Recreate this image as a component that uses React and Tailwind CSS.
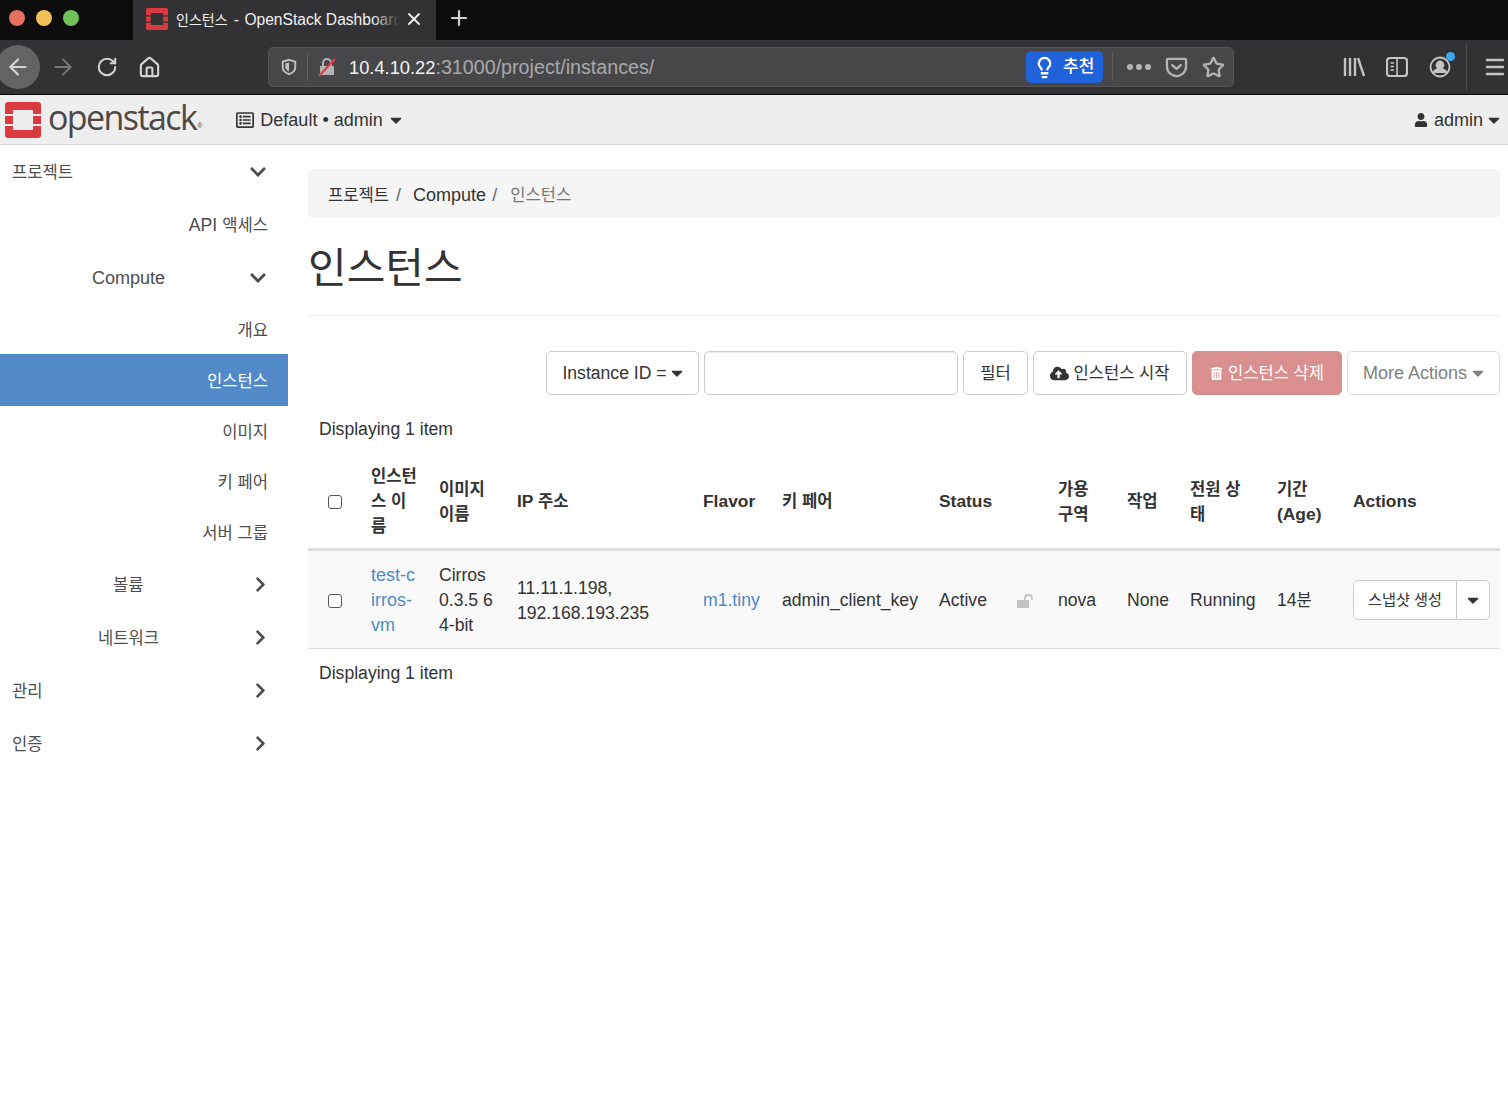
import { ArrowLeft, ArrowRight, RotateCw, Home, X, Plus, Lightbulb, Star, Menu } from 'lucide-react';
import { FaUser, FaCloudUploadAlt, FaTrashAlt, FaChevronDown, FaChevronRight, FaCaretDown, FaRegListAlt } from 'react-icons/fa';

// Korean glyphs run wider in Noto than in the original font, so they get their own size
const K = ({ children }) => <span className="text-[16.6px]">{children}</span>;

const LogoMark = ({ className }) => (
    <svg viewBox="0 0 36 36" className={className}>
        <path fill="#da3a3f" d="M3 0h30a3 3 0 0 1 3 3v9h-8V8H8v4H0V3a3 3 0 0 1 3-3zM0 14h8v8H0zM28 14h8v8h-8zM0 24h8v4h20v-4h8v9a3 3 0 0 1-3 3H3a3 3 0 0 1-3-3z" />
    </svg>
);

const Chrome = () => (
    <div className="bg-[#323234]">
        <div className="h-10 bg-[#0c0c0d] flex items-center">
            <div className="w-[133px] pl-[9px] pb-[5px] flex items-center gap-[11px]">
                <span className="w-4 h-4 rounded-full bg-[#e5705f]" />
                <span className="w-4 h-4 rounded-full bg-[#f2bf57]" />
                <span className="w-4 h-4 rounded-full bg-[#6fc253]" />
            </div>
            <div className="w-[303px] h-10 bg-[#323234] flex items-center pl-[13px] pb-[3px] text-white">
                <LogoMark className="w-[22px] h-[22px] shrink-0" />
                <div className="ml-[8px] w-[224px] relative overflow-hidden whitespace-nowrap text-[15.6px] leading-[20px] pt-[2px] text-[#f0f0f0]">
                    <span className="text-[14px]">인스턴스</span><span className="ml-[2px]"> - </span><span className="ml-[1px]">OpenStack Dashboard</span>
                    <span className="absolute right-0 top-0 bottom-0 w-7 bg-linear-to-r from-transparent to-[#323234]" />
                </div>
                <X size={20} strokeWidth={2.2} className="ml-[4px] text-[#f0f0f0]" />
            </div>
            <Plus size={24} strokeWidth={2.2} className="ml-[11px] mb-[4px] text-[#d0d0d0]" />
        </div>
        <div className="h-[55px] flex items-center border-b border-b-[#0c0c0d] relative">
            <div className="w-[44px] h-[44px] rounded-full bg-[#636365] -ml-[4px] flex items-center justify-center">
                <ArrowLeft size={26} strokeWidth={2} className="text-[#d4d4d4]" />
            </div>
            <ArrowRight size={26} strokeWidth={1.8} className="ml-[10px] text-[#77777a]" />
            <RotateCw size={22} strokeWidth={2.2} className="ml-[20px] text-[#d4d4d4]" />
            <Home size={23} strokeWidth={2.2} className="ml-[20px] text-[#d4d4d4]" />
            <div className="ml-[107px] w-[966px] h-10 rounded-[5px] bg-[#474749] border border-[#555557] flex items-center">
                <svg viewBox="0 0 20 20" className="w-[18px] h-[20px] ml-[11px] text-[#c4c4c4]" fill="none" stroke="currentColor" strokeWidth="2">
                    <path d="M10 2l7 2v6c0 4-3 6.5-7 8-4-1.500-7-4-7-8V4z" />
                    <path fill="currentColor" stroke="none" d="M10 5v10c-2.500-1-4-3-4-5V6z" />
                </svg>
                <span className="ml-[9px] w-px h-7 bg-[#5f5f61]" />
                <svg viewBox="0 0 20 20" className="w-5 h-5 ml-[9px]">
                    <path fill="#b4b4b4" d="M3 9h14v9H3z" />
                    <path fill="none" stroke="#b4b4b4" strokeWidth="2" d="M6 9V6a4 4 0 0 1 8 0v3" />
                    <path stroke="#e8384f" strokeWidth="2" d="M2 19L18 2" />
                </svg>
                <span className="ml-[12px] pt-[1px] text-[18.3px] text-[#f4f4f4] whitespace-nowrap">10.4.10.22<span className="text-[19.7px] text-[#a9a9ab]">:31000/project/instances/</span></span>
                <div className="ml-auto h-8 w-[77px] rounded-[5px] bg-[#1f62da] flex items-center text-white">
                    <Lightbulb size={23} strokeWidth={2.4} className="ml-[7px]" />
                    <span className="ml-[7px] text-[17px] font-medium">추천</span>
                </div>
                <span className="ml-[9px] w-px h-7 bg-[#5f5f61]" />
                <svg viewBox="0 0 24 8" className="w-[24px] h-2 ml-[14px]" fill="#b4b4b4">
                    <circle cx="3" cy="4" r="3" /><circle cx="12" cy="4" r="3" /><circle cx="21" cy="4" r="3" />
                </svg>
                <svg viewBox="0 0 24 22" className="w-[23px] h-[21px] ml-[14px]" fill="none" stroke="#b4b4b4" strokeWidth="2.4" strokeLinecap="round" strokeLinejoin="round">
                    <path d="M3 2h18a1 1 0 0 1 1 1v7a10 10 0 0 1-20 0V3a1 1 0 0 1 1-1z" />
                    <path d="M7.500 8.500l4.500 4 4.500-4" />
                </svg>
                <Star size={23} strokeWidth={2.4} className="ml-[14px] mr-[8px] text-[#b4b4b4]" />
            </div>
            <svg viewBox="0 0 22 20" className="w-[22px] h-[20px] ml-[109px]" fill="none" stroke="#c4c4c4" strokeWidth="2.400">
                <path d="M2 1v18M7 1v18M12 1v18M15 1l6 18" />
            </svg>
            <svg viewBox="0 0 22 20" className="w-[22px] h-[20px] ml-[21px]" fill="none" stroke="#c4c4c4" strokeWidth="2.200">
                <rect x="1" y="1" width="20" height="18" rx="3" />
                <path d="M11 1v18M4.500 6H8M4.500 9.500H8M4.500 13H8" strokeWidth="1.600" />
            </svg>
            <div className="relative ml-[21px] w-[22px] h-[22px]">
                <svg viewBox="0 0 22 22" className="w-[22px] h-[22px]" fill="none" stroke="#c4c4c4" strokeWidth="1.800">
                    <circle cx="11" cy="11" r="9.500" />
                    <circle cx="11" cy="9" r="3.500" fill="#c4c4c4" />
                    <path d="M4.500 17c1-3.500 3.500-4 6.500-4s5.500.5 6.500 4" fill="#c4c4c4" />
                </svg>
                <span className="absolute -top-[4px] -right-[4px] w-[9px] h-[9px] rounded-full bg-[#3ea6ef]" />
            </div>
            <span className="ml-[15px] w-px h-[46px] bg-[#4c4c4e]" />
            <Menu size={24} strokeWidth={2.4} className="ml-[16px] text-[#c4c4c4]" />
        </div>
    </div>
);

const TopNav = () => (
    <div className="h-[50px] bg-[#eeeeee] border-b border-b-[#d8d8d8] flex items-center text-[18px] text-[#333333]">
        <LogoMark className="ml-[5px] w-[36px] h-[36px]" />
        <span className="ml-[7px] text-[34px] font-medium tracking-[-1.6px] leading-none -mt-[6px] text-[#4e4845] font-['Open_Sans',sans-serif]">openstack</span>
        <span className="text-[7px] mt-[14px] ml-[1px] text-[#4e4845]">®</span>
        <FaRegListAlt size={18} className="ml-[34px] mt-[1px]" />
        <span className="ml-[6px] mt-[1px]">Default • admin</span>
        <FaCaretDown size={18} className="ml-[4px]" />
        <FaUser size={14} className="ml-auto" />
        <span className="ml-[6px] mt-[1px]">admin</span>
        <FaCaretDown size={18} className="ml-[2px] mr-[5px]" />
    </div>
);

const SideRow = ({ children, chevron, pad = 'justify-end pr-5', h = 'h-[53px]', active }) => (
    <div className={`${h} flex items-center relative pt-[2px] ${pad} ${active ? 'bg-[#5289c9] text-white' : ''}`}>
        <span>{children}</span>
        {chevron === 'down' && <FaChevronDown size={18} className="absolute right-[21px] top-[18px]" />}
        {chevron === 'right' && <FaChevronRight size={17} className="absolute right-[19px] top-[18px]" />}
    </div>
);

const Sidebar = () => (
    <div className="w-[288px] shrink-0 text-[18px] text-[#4d4d4d]">
        <SideRow chevron="down" pad="pl-3"><K>프로젝트</K></SideRow>
        <SideRow><span className="text-[17.6px]">API</span> <K>액세스</K></SideRow>
        <SideRow chevron="down" pad="pl-[92px]">Compute</SideRow>
        <SideRow h="h-[50px]"><K>개요</K></SideRow>
        <SideRow h="h-[52px]" active><K>인스턴스</K></SideRow>
        <SideRow h="h-[50px]"><K>이미지</K></SideRow>
        <SideRow h="h-[51px]"><K>키 페어</K></SideRow>
        <SideRow h="h-[51px]"><K>서버 그룹</K></SideRow>
        <SideRow chevron="right" pad="pl-[113px]"><K>볼륨</K></SideRow>
        <SideRow chevron="right" pad="pl-[98px]"><K>네트워크</K></SideRow>
        <SideRow chevron="right" pad="pl-3"><K>관리</K></SideRow>
        <SideRow chevron="right" pad="pl-3"><K>인증</K></SideRow>
    </div>
);

const Btn = ({ className = '', children }) => (
    <div className={`h-[44px] rounded-[5px] border border-[#cccccc] flex items-center justify-center whitespace-nowrap bg-white ${className}`}>{children}</div>
);

const Check = () => <span className="block w-[14px] h-[14px] rounded-[3px] border-[1.5px] border-[#555555] bg-white mx-auto" />;

const widths = [53, 68, 78, 186, 79, 157, 78, 41, 69, 63, 87, 76, 157];

const Table = () => (
    <table className="w-[1192px] table-fixed border-collapse">
        <colgroup>
            {widths.map((w, i) => <col key={i} style={{ width: w }} />)}
        </colgroup>
        <thead>
            <tr className="border-b-[3px] border-b-[#dddddd] font-bold text-left text-[17.4px] [&>th]:align-middle [&>th]:px-[10px] [&>th]:pt-[1px] [&>th]:pb-[9px]">
                <th className="!pl-[20px] !pr-[19px]"><Check /></th>
                <th><K>인스턴<br />스 이<br />름</K></th>
                <th><K>이미지<br />이름</K></th>
                <th>IP <K>주소</K></th>
                <th>Flavor</th>
                <th><K>키 페어</K></th>
                <th colSpan={2}>Status</th>
                <th><K>가용<br />구역</K></th>
                <th><K>작업</K></th>
                <th><K>전원 상<br />태</K></th>
                <th><K>기간</K><br />(Age)</th>
                <th>Actions</th>
            </tr>
        </thead>
        <tbody>
            <tr className="bg-[#f9f9f9] border-b border-b-[#dddddd] [&>td]:align-middle [&>td]:px-[10px] [&>td]:pt-[12px] [&>td]:pb-[10px]">
                <td className="!pl-[20px] !pr-[19px]"><Check /></td>
                <td className="text-[#4e8ac8] text-[18px]">test-c<br />irros-<br />vm</td>
                <td>Cirros<br />0.3.5 6<br />4-bit</td>
                <td>11.11.1.198,<br />192.168.193.235</td>
                <td className="text-[#4e8ac8]">m1.tiny</td>
                <td className="whitespace-nowrap">admin_client_key</td>
                <td>Active</td>
                <td>
                    <svg viewBox="0 0 18 14" className="w-[18px] h-[14px]">
                        <path fill="#c4c4c4" d="M0 6h12v8H0z" />
                        <path fill="none" stroke="#c4c4c4" strokeWidth="1.800" d="M8 6V4a3 3 0 0 1 3-3h1a3 3 0 0 1 3 3v2" />
                    </svg>
                </td>
                <td>nova</td>
                <td className="whitespace-nowrap">None</td>
                <td className="whitespace-nowrap">Running</td>
                <td>14<K>분</K></td>
                <td className="!pt-[11px] !pb-[11px]">
                    <div className="h-10 w-[137px] rounded-[5px] border border-[#cccccc] bg-white flex items-center text-[15.2px]">
                        <span className="w-[103px] text-center border-r border-r-[#cccccc] leading-[38px]">스냅샷 생성</span>
                        <FaCaretDown size={18} className="mx-auto" />
                    </div>
                </td>
            </tr>
        </tbody>
    </table>
);

const Main = () => (
    <div className="flex-1 min-w-0 pt-6 pl-5 pr-2 text-[17.6px] leading-[25px] text-[#333333]">
        <div className="h-[49px] rounded-[5px] bg-[#f5f5f5] flex items-center pl-[20px] pt-[3px] text-[18px]">
            <K>프로젝트</K>
            <span className="ml-[7px] text-[#666666]">/</span>
            <span className="ml-[12px]">Compute</span>
            <span className="ml-[6px] text-[#666666]">/</span>
            <span className="ml-[13px] text-[#777777]"><K>인스턴스</K></span>
        </div>
        <h1 className="mt-[21px] h-[77px] pt-[2px] text-[42px] leading-[55px] font-normal border-b border-b-[#eeeeee]">인스턴스</h1>
        <div className="mt-[35px] flex justify-end gap-[5px]">
            <Btn className="w-[153px] pl-[3px]">Instance ID =<FaCaretDown size={18} className="ml-[1px]" /></Btn>
            <div className="w-[254px] h-[44px] rounded-[5px] border border-[#cccccc] shadow-[inset_0_1px_1px_rgba(0,0,0,0.08)]" />
            <Btn className="w-[65px]"><K>필터</K></Btn>
            <Btn className="w-[154px]"><FaCloudUploadAlt size={19} className="mr-[4px]" /><K>인스턴스 시작</K></Btn>
            <Btn className="w-[150px] !bg-[#d98f8d] !border-[#d98f8d] text-white"><FaTrashAlt size={13} className="mr-[5px]" /><K>인스턴스 삭제</K></Btn>
            <Btn className="w-[153px] pl-[3px] text-[#808080] !border-[#dddddd] text-[18px]">More Actions<FaCaretDown size={18} className="ml-[2px]" /></Btn>
        </div>
        <div className="mt-[22px] pl-[11px]">Displaying 1 item</div>
        <div className="mt-[21px]"><Table /></div>
        <div className="mt-[12px] pl-[11px]">Displaying 1 item</div>
    </div>
);

export default function App() {
    return (
        <div className="min-h-[1104px] bg-white overflow-hidden font-['Liberation_Sans','Noto_Sans_CJK_KR',sans-serif]">
            <Chrome />
            <TopNav />
            <div className="flex">
                <Sidebar />
                <Main />
            </div>
        </div>
    );
}
